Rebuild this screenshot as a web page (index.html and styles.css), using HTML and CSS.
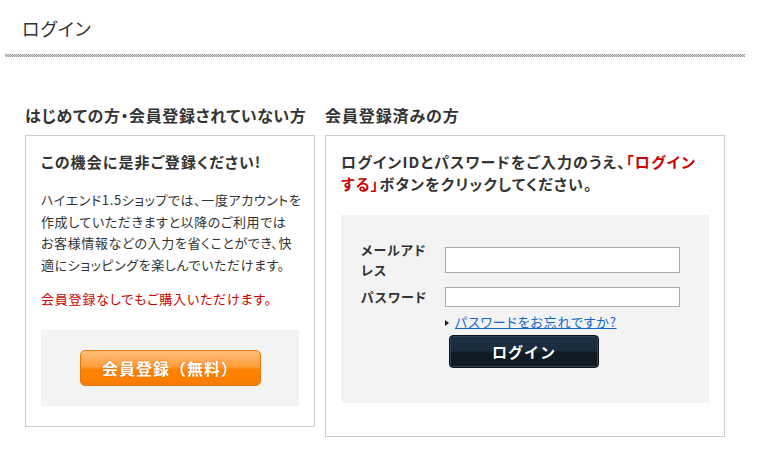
FILE: index.html
```html
<!DOCTYPE html>
<html lang="ja">
<head>
<meta charset="utf-8">
<title>ログイン</title>
<link rel="stylesheet" href="styles.css">
</head>
<body>
<div class="page">
  <h1 class="page-title">ログイン</h1>
  <div class="rule"></div>
  <div class="columns">
    <section class="col col-new">
      <h2 class="col-heading">はじめての方・会員登録されていない方</h2>
      <div class="box">
        <h3 class="box-title">この機会に是非ご登録ください!</h3>
        <p class="box-text">ハイエンド1.5ショップでは、一度アカウントを<br>作成していただきますと以降のご利用では<br>お客様情報などの入力を省くことができ、快<br>適にショッピングを楽しんでいただけます。</p>
        <p class="box-note">会員登録なしでもご購入いただけます。</p>
        <div class="panel panel-center">
          <button class="btn-register" type="button">会員登録（無料）</button>
        </div>
      </div>
    </section>
    <section class="col col-member">
      <h2 class="col-heading">会員登録済みの方</h2>
      <div class="box box-member">
        <p class="lead">ログインIDとパスワードをご入力のうえ、<span class="red">「ログイン<br>する」</span>ボタンをクリックしてください。</p>
        <div class="panel panel-form">
          <form class="login-form">
            <label class="field-label" for="email">メールアド<br>レス</label>
            <input class="field-input field-email" id="email" type="text">
            <label class="field-label" for="pass">パスワード</label>
            <input class="field-input field-pass" id="pass" type="password">
            <div class="form-actions">
              <div class="forgot"><a href="#">パスワードをお忘れですか?</a></div>
              <button class="btn-login" type="button">ログイン</button>
            </div>
          </form>
        </div>
      </div>
    </section>
  </div>
</div>
</body>
</html>
```
FILE: styles.css
```css
* { box-sizing: border-box; }
html, body { margin: 0; padding: 0; background: #fff; }
body {
  font-family: "Noto Sans CJK JP", "Noto Sans", sans-serif;
  color: #333;
  font-feature-settings: "palt";
}
.page { width: 760px; }
.page-title {
  margin: 0;
  padding: 16px 0 0 22px;
  font-size: 18px;
  line-height: 24px;
  font-weight: normal;
  letter-spacing: 1px;
  color: #333;
}
.rule {
  margin: 14px 15px 0 5px;
  height: 3px;
  background-image: repeating-conic-gradient(#999 0% 25%, #dcdcdc 0% 50%);
  background-size: 2px 2px;
}
.columns {
  display: flex;
  align-items: flex-start;
  gap: 10px;
  padding: 47px 0 0 25px;
}
.col-new { width: 290px; }
.col-member { width: 400px; }
.col-heading {
  margin: 0 0 9px;
  font-size: 16px;
  line-height: 22px;
  font-weight: bold;
  letter-spacing: 0.6px;
  color: #333;
  white-space: nowrap;
}
.col-member .col-heading { letter-spacing: 0.9px; }
.box {
  border: 1px solid #ccc;
  padding: 15px 15px 20px;
}
.box-member { padding-bottom: 33px; }
.box-title {
  margin: 0;
  font-size: 15px;
  line-height: 22px;
  font-weight: bold;
  letter-spacing: 1.1px;
}
.box-text {
  margin: 16px 0 0;
  font-size: 13px;
  line-height: 21.5px;
  letter-spacing: 0.6px;
  white-space: nowrap;
}
.box-note {
  margin: 13px 0 0;
  font-size: 13px;
  line-height: 21.5px;
  letter-spacing: 0.8px;
  color: #cc0000;
}
.panel { background: #f3f3f3; }
.panel-center {
  margin-top: 20px;
  padding: 20px 0;
  display: flex;
  justify-content: center;
}
.btn-register {
  width: 181px;
  height: 36px;
  border: 1px solid #e97a0a;
  border-radius: 5px;
  background: linear-gradient(#ffbd7a 0%, #ff9f3c 45%, #ff8400 55%, #ff7f00 85%, #f07a10 100%);
  color: #fff;
  font-family: inherit;
  font-size: 16px;
  font-weight: bold;
  letter-spacing: 1px;
  text-shadow: 0 0 2px rgba(170, 70, 0, 0.6);
  padding: 0;
  cursor: pointer;
}
.lead {
  margin: 0;
  font-size: 15px;
  line-height: 22px;
  font-weight: bold;
  letter-spacing: 1.2px;
  white-space: nowrap;
}
.red { color: #cc0000; }
.panel-form {
  margin-top: 20px;
  padding: 25px 20px 35px;
}
.login-form {
  display: grid;
  grid-template-columns: 70px 235px;
  column-gap: 14px;
  row-gap: 7px;
  align-items: center;
}
.field-label {
  font-size: 13px;
  line-height: 20px;
  font-weight: bold;
  letter-spacing: 1px;
  color: #333;
}
.field-input {
  margin: 0;
  width: 235px;
  border: 1px solid #aaa;
  background: #fff;
  padding: 2px 4px;
  font-size: 13px;
  font-family: inherit;
}
.field-email { height: 26px; }
.field-pass { height: 20px; }
.form-actions {
  grid-column: 2;
  margin-top: -2px;
}
.forgot {
  position: relative;
  padding-left: 10px;
  font-size: 13px;
  line-height: 20px;
  letter-spacing: 0.8px;
}
.forgot::before {
  content: "";
  position: absolute;
  left: 0;
  top: 8px;
  border-left: 4px solid #222;
  border-top: 3px solid transparent;
  border-bottom: 3px solid transparent;
}
.forgot a { color: #1166cc; text-decoration: underline; }
.btn-login {
  display: block;
  margin: 3px 0 0 4px;
  width: 150px;
  height: 33px;
  border: 1px solid #0b121a;
  border-radius: 4px;
  background: linear-gradient(#1d3042 0%, #1a2c3d 48%, #111c26 52%, #0f1820 100%);
  box-shadow: inset 0 0 0 1px #2c4256;
  color: #fff;
  font-family: inherit;
  font-size: 15px;
  font-weight: bold;
  letter-spacing: 1px;
  padding: 0;
  cursor: pointer;
}
```
